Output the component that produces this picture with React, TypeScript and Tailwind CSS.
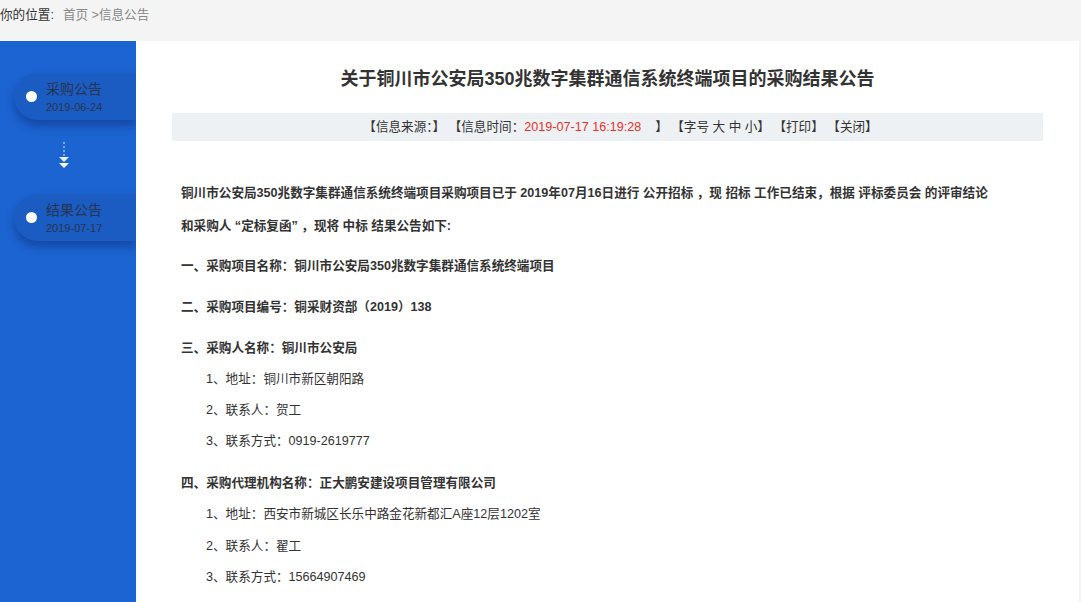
import React from "react";

const font = { fontFamily: '"Liberation Sans", "Noto Sans CJK SC", sans-serif' };

function Pill({ title, date }: { title: string; date: string }) {
  return (
    <div className="ml-[14px] h-[47px] rounded-l-full bg-[#1b5cc2] shadow-[0_6px_8px_rgba(10,40,110,0.45)] flex items-center">
      <div className="ml-[12px] w-[11px] h-[11px] rounded-full bg-white" />
      <div className="ml-[9px] flex flex-col gap-[2px]">
        <span className="text-[14px] leading-[18px] text-[#27344f]">{title}</span>
        <span className="text-[11px] leading-[14px] text-[#27344f]">{date}</span>
      </div>
    </div>
  );
}

function Arrow() {
  return (
    <div className="flex justify-center w-[128px] pt-[22px] pb-[24px]">
      <svg width="12" height="28" viewBox="0 0 12 28">
        <line x1="6" y1="0" x2="6" y2="14" stroke="#9cc0f3" strokeWidth="1.5" strokeDasharray="2 2" />
        <polygon points="1,15 11,15 6,20" fill="#e8f0fc" />
        <polygon points="1,21 11,21 6,26" fill="#ffffff" />
      </svg>
    </div>
  );
}

export default function App() {
  return (
    <div className="w-full min-h-[602px] bg-[#f4f4f4] text-[#333]" style={font}>
      <div className="h-[41px] pt-[6px] text-[12.6px] leading-[18px]">
        <span className="text-[#333]">你的位置:</span>
        <span className="ml-[9px] text-[#888]">首页 &gt;信息公告</span>
      </div>
      <div className="flex h-[561px] pr-[2px]">
        <div className="w-[136px] bg-[#1c64d2] pt-[32px] overflow-hidden">
          <Pill title="采购公告" date="2019-06-24" />
          <Arrow />
          <Pill title="结果公告" date="2019-07-17" />
        </div>
        <div className="flex-1 bg-white pt-[25px] overflow-hidden">
          <h1 className="text-center text-[18px] leading-[26px] font-bold text-[#333]">
            关于铜川市公安局350兆数字集群通信系统终端项目的采购结果公告
          </h1>
          <div className="mt-[21px] mx-[36px] h-[28px] bg-[#eef1f4] flex items-center justify-center text-[12.6px] text-[#333] whitespace-pre">
            <span className="pl-[26px]">【信息来源：】 【信息时间：</span>
            <span className="text-[#e8332a]">2019-07-17 16:19:28</span>
            <span>    】 【字号 大 中 小】 【打印】 【关闭】</span>
          </div>
          <div className="pl-[45px] pt-[36px] text-[12.6px] text-[#333]">
            <div className="font-bold leading-[33px] whitespace-nowrap">
              <div>铜川市公安局350兆数字集群通信系统终端项目采购项目已于 2019年07月16日进行 公开招标 ，现 招标 工作已结束，根据 评标委员会 的评审结论</div>
              <div>和采购人 “定标复函” ，现将 中标 结果公告如下:</div>
            </div>
            <div className="font-bold leading-[31px] mt-[8px]">一、采购项目名称：铜川市公安局350兆数字集群通信系统终端项目</div>
            <div className="font-bold leading-[31px] mt-[10px]">二、采购项目编号：铜采财资部（2019）138</div>
            <div className="font-bold leading-[31px] mt-[10px]">三、采购人名称：铜川市公安局</div>
            <div className="pl-[25px] leading-[31px]">
              <div>1、地址：铜川市新区朝阳路</div>
              <div>2、联系人：贺工</div>
              <div>3、联系方式：0919-2619777</div>
            </div>
            <div className="font-bold leading-[31px] mt-[11px]">四、采购代理机构名称：正大鹏安建设项目管理有限公司</div>
            <div className="pl-[25px] leading-[31.5px]">
              <div>1、地址：西安市新城区长乐中路金花新都汇A座12层1202室</div>
              <div>2、联系人：翟工</div>
              <div>3、联系方式：15664907469</div>
            </div>
          </div>
        </div>
      </div>
    </div>
  );
}
